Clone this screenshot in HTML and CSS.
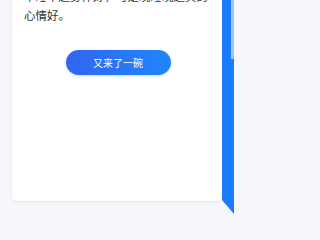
FILE: index.html
```html
<!DOCTYPE html>
<html lang="zh">
<head>
<meta charset="utf-8">
<link rel="stylesheet" href="styles.css">
</head>
<body>
<div class="page">
  <div class="card">
    <p class="text">早睡早起身体好，可是晚睡晚起真的心情好。</p>
    <button class="btn">又来了一碗</button>
  </div>
  <div class="ribbon"><div class="ribbon-strip"></div></div>
</div>
</body>
</html>
```
FILE: styles.css
```css
html, body {
  margin: 0;
  padding: 0;
}
body {
  width: 234px;
  height: 234px;
  overflow: hidden;
  background: #f5f7fb;
  font-family: "Noto Sans CJK SC", "Noto Sans", sans-serif;
}
.page {
  display: flex;
  align-items: flex-start;
  padding-left: 12px;
  margin-top: -13px;
}
.card {
  width: 210px;
  height: 214px;
  box-sizing: border-box;
  background: #ffffff;
  border-radius: 0 0 5px 5px;
  box-shadow: 0 1px 3px rgba(20, 40, 80, 0.08);
  padding: 0 10px 0 12px;
  display: flex;
  flex-direction: column;
  align-items: flex-start;
}
.text {
  margin: 0;
  font-size: 11.5px;
  line-height: 19px;
  color: #333333;
}
.btn {
  align-self: center;
  margin-top: 25px;
  margin-left: 0;
  width: 105px;
  height: 25px;
  border: 0;
  border-radius: 13px;
  background: linear-gradient(90deg, #3165f1 0%, #1f86fb 100%);
  color: #ffffff;
  font-family: "Noto Sans CJK SC", "Noto Sans", sans-serif;
  font-size: 10px;
  padding: 0;
  box-shadow: 0 1px 3px rgba(40, 100, 230, 0.25);
}
.ribbon {
  width: 12px;
  height: 227px;
  background: #1a7bff;
  clip-path: polygon(0 0, 100% 0, 100% 100%, 0 calc(100% - 14px));
  display: flex;
  justify-content: flex-end;
}
.ribbon-strip {
  width: 3px;
  height: 72px;
  background: #9cc6ff;
}
```
